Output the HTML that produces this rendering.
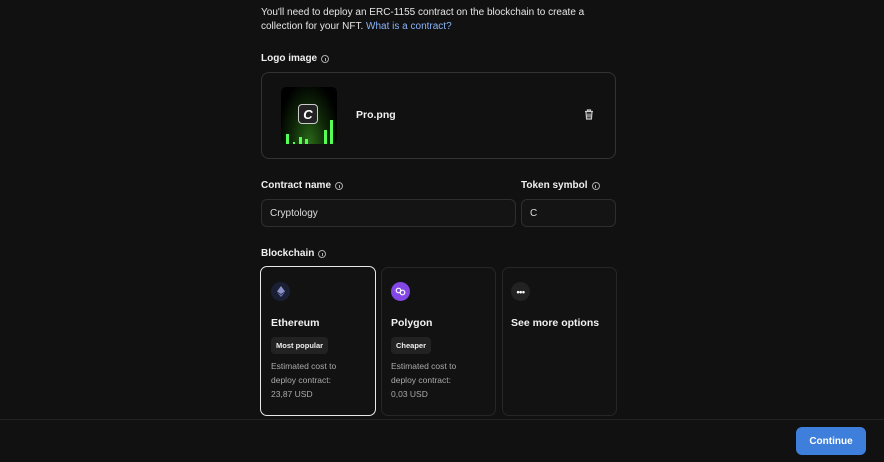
<!DOCTYPE html>
<html><head><meta charset="utf-8"><style>
*{box-sizing:border-box;margin:0;padding:0}
body{width:884px;height:462px;background:#111112;font-family:"Liberation Sans",sans-serif;color:#eee;position:relative;overflow:hidden}
.a{position:absolute}
.p{font-size:10px;color:#e6e6e6;line-height:14px}
.lbl{font-size:10px;font-weight:bold;color:#f0f0f0;display:flex;align-items:center;gap:4px}
.i{width:8px;height:8px;border:1px solid #aaa;border-radius:50%;display:inline-block;position:relative}
.i:after{content:"";position:absolute;left:2.5px;top:2px;width:1px;height:3px;background:#aaa}
.box{border:1px solid #333;border-radius:8px;background:#111112}
.inp{border:1px solid #2e2e2e;border-radius:6px;background:#141415;font-size:10px;color:#ddd;padding:0 8px;display:flex;align-items:center}
.card{border:1px solid #262626;border-radius:7px;background:#121213}
.card.sel{border:1.5px solid #e8e8e8}
.ct{font-size:10.5px;font-weight:bold;color:#f2f2f2}
.tag{font-size:7.5px;font-weight:bold;background:#222;border-radius:4px;padding:4px 5px;color:#eee}
.cost{font-size:8.5px;color:#aaa;line-height:14px}
.ic{width:19px;height:19px;border-radius:50%;display:flex;align-items:center;justify-content:center}
</style></head><body>
<div class="a p" style="left:261px;top:6px;width:340px">You'll need to deploy an ERC-1155 contract on the blockchain to create a collection for your NFT. <span style="color:#8ab4f8">What is a contract?</span></div>
<div class="a lbl" style="left:261px;top:53px">Logo image <span class="i"></span></div>
<div class="a box" style="left:261px;top:72px;width:355px;height:87px"></div>
<div class="a" style="left:281px;top:87px;width:56px;height:57px;border-radius:5px;background:radial-gradient(ellipse at 50% 100%,#2a6a18 0%,#0e2608 45%,#000 80%);overflow:hidden">
 <div class="a" style="left:17px;top:17px;width:20px;height:20px;border:1.5px solid #ccc;border-radius:4px;background:#222;display:flex;align-items:center;justify-content:center;color:#fff;font-weight:bold;font-size:13px;font-style:italic">C</div>
 <div class="a" style="left:5px;bottom:0;width:3px;height:10px;background:#5f5"></div>
 <div class="a" style="left:12px;bottom:0;width:2px;height:2px;background:#5f5"></div>
 <div class="a" style="left:18px;bottom:0;width:3px;height:7px;background:#5f5"></div>
 <div class="a" style="left:24px;bottom:0;width:3px;height:5px;background:#5f5"></div>
 <div class="a" style="left:43px;bottom:0;width:3px;height:14px;background:#5f5"></div>
 <div class="a" style="left:49px;bottom:0;width:3px;height:24px;background:#5f5"></div>
</div>
<div class="a" style="left:356px;top:109px;font-size:10.5px;font-weight:bold;color:#f2f2f2">Pro.png</div>
<svg class="a" style="left:584px;top:109px" width="10" height="11" viewBox="0 0 10 11" fill="none" stroke="#ccc" stroke-width="1.2"><path d="M1 2.5h8M3.5 2.5V1h3v1.5M2 2.5l.6 7.5h4.8L8 2.5M4 4.5v4M6 4.5v4"/></svg>
<div class="a lbl" style="left:261px;top:180px">Contract name <span class="i"></span></div>
<div class="a lbl" style="left:521px;top:180px">Token symbol <span class="i"></span></div>
<div class="a inp" style="left:261px;top:199px;width:255px;height:28px">Cryptology</div>
<div class="a inp" style="left:521px;top:199px;width:95px;height:28px">C</div>
<div class="a lbl" style="left:261px;top:248px">Blockchain <span class="i"></span></div>

<div class="a card sel" style="left:260px;top:266px;width:116px;height:150px"></div>
<div class="a ic" style="left:271px;top:282px;background:#1b1f33"><svg width="8" height="11" viewBox="0 0 8 11"><path d="M4 0L0 5.5 4 8 8 5.5z" fill="#8a90c8"/><path d="M4 8.8L0 6.3 4 11 8 6.3z" fill="#6a70a8"/></svg></div>
<div class="a ct" style="left:271px;top:317px">Ethereum</div>
<div class="a tag" style="left:271px;top:337px">Most popular</div>
<div class="a cost" style="left:271px;top:359px">Estimated cost to<br>deploy contract:<br>23,87 USD</div>

<div class="a card" style="left:381px;top:267px;width:115px;height:149px"></div>
<div class="a ic" style="left:391px;top:282px;background:#8247e5"><svg width="11" height="9" viewBox="0 0 11 9" fill="none" stroke="#fff" stroke-width="1.2"><circle cx="3.5" cy="3.5" r="2.3"/><circle cx="7.5" cy="5.5" r="2.3"/></svg></div>
<div class="a ct" style="left:391px;top:317px">Polygon</div>
<div class="a tag" style="left:391px;top:337px">Cheaper</div>
<div class="a cost" style="left:391px;top:359px">Estimated cost to<br>deploy contract:<br>0,03 USD</div>

<div class="a card" style="left:502px;top:267px;width:115px;height:149px"></div>
<div class="a ic" style="left:511px;top:282px;background:#222;color:#fff;font-size:9px;font-weight:bold;letter-spacing:-0.5px">&bull;&bull;&bull;</div>
<div class="a ct" style="left:511px;top:317px">See more options</div>

<div class="a" style="left:0;top:419px;width:884px;height:1px;background:#222"></div>
<div class="a" style="left:796px;top:427px;width:70px;height:28px;border-radius:6px;background:#3f7fdc;color:#fff;font-size:10px;font-weight:bold;display:flex;align-items:center;justify-content:center">Continue</div>
</body></html>
